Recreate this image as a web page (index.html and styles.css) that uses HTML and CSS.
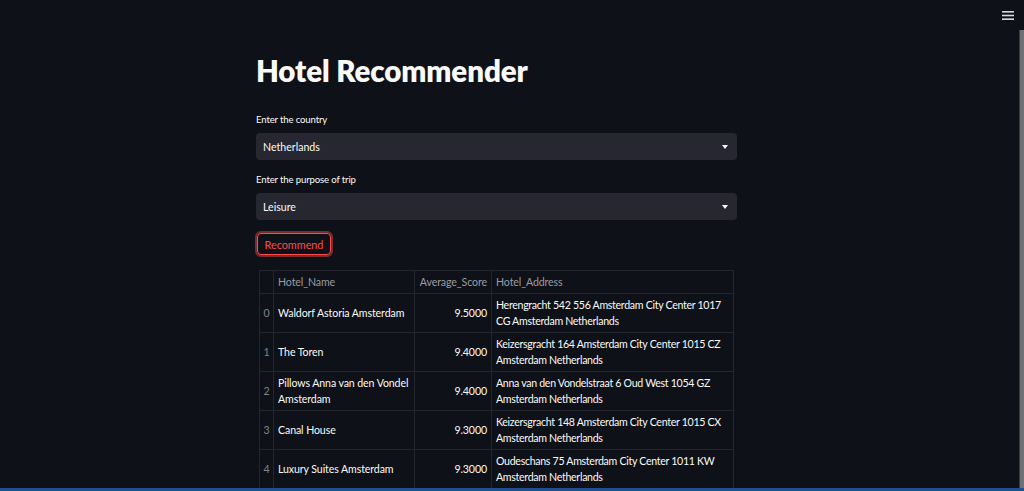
FILE: index.html
```html
<!DOCTYPE html>
<html>
<head>
<meta charset="utf-8">
<link rel="stylesheet" href="styles.css">
</head>
<body>
<div class="app">
  <div class="menu" aria-label="menu">
    <svg width="12" height="9" viewBox="0 0 12 9"><rect x="0" y="0" width="12" height="1.6" fill="#d8d8d8"/><rect x="0" y="3.7" width="12" height="1.6" fill="#d8d8d8"/><rect x="0" y="7.4" width="12" height="1.6" fill="#d8d8d8"/></svg>
  </div>
  <div class="scrollbar"></div>
  <main class="main">
    <h1 class="title">Hotel Recommender</h1>
    <div class="field first">
      <label class="label">Enter the country</label>
      <div class="select"><span>Netherlands</span><span class="caret"></span></div>
    </div>
    <div class="field second">
      <label class="label">Enter the purpose of trip</label>
      <div class="select"><span>Leisure</span><span class="caret"></span></div>
    </div>
    <div class="btn-wrap"><button class="btn">Recommend</button></div>
    <div class="df">
      <table class="table">
        <colgroup><col class="c0"><col class="c1"><col class="c2"><col class="c3"></colgroup>
        <thead>
          <tr><th class="idx"></th><th>Hotel_Name</th><th class="num">Average_Score</th><th>Hotel_Address</th></tr>
        </thead>
        <tbody>
          <tr><td class="idx">0</td><td>Waldorf Astoria Amsterdam</td><td class="num">9.5000</td><td class="addr">Herengracht 542 556 Amsterdam City Center 1017<br>CG Amsterdam Netherlands</td></tr>
          <tr><td class="idx">1</td><td>The Toren</td><td class="num">9.4000</td><td class="addr">Keizersgracht 164 Amsterdam City Center 1015 CZ<br>Amsterdam Netherlands</td></tr>
          <tr><td class="idx">2</td><td>Pillows Anna van den Vondel<br>Amsterdam</td><td class="num">9.4000</td><td class="addr">Anna van den Vondelstraat 6 Oud West 1054 GZ<br>Amsterdam Netherlands</td></tr>
          <tr><td class="idx">3</td><td>Canal House</td><td class="num">9.3000</td><td class="addr">Keizersgracht 148 Amsterdam City Center 1015 CX<br>Amsterdam Netherlands</td></tr>
          <tr><td class="idx">4</td><td>Luxury Suites Amsterdam</td><td class="num">9.3000</td><td class="addr">Oudeschans 75 Amsterdam City Center 1011 KW<br>Amsterdam Netherlands</td></tr>
        </tbody>
      </table>
    </div>
  </main>
  <div class="bottombar"></div>
</div>
</body>
</html>
```
FILE: styles.css
```css
html, body {
  margin: 0;
  padding: 0;
  background: #0e1117;
  height: 100%;
  overflow: hidden;
}
body {
  font-family: "Lato", "Liberation Sans", sans-serif;
  color: #fafafa;
}
.app {
  position: relative;
  width: 1024px;
  height: 491px;
  overflow: hidden;
}
.menu {
  position: absolute;
  left: 1002px;
  top: 11px;
  line-height: 0;
}
.scrollbar {
  position: absolute;
  left: 1019px;
  top: 30px;
  width: 5px;
  height: 461px;
  background: #6f7074;
  border-left: 1px solid #3b3c40;
  box-sizing: border-box;
}
.bottombar {
  position: absolute;
  left: 0;
  bottom: 0;
  width: 1024px;
  height: 3px;
  background: #1f4f8e;
}
.main {
  width: 481px;
  margin-left: 256px;
  padding-top: 52px;
  display: flex;
  flex-direction: column;
}
.title {
  margin: 0;
  font-size: 29.5px;
  font-weight: 800;
  line-height: 38px;
  letter-spacing: -0.1px;
  color: #fafafa;
}
.field {
  display: flex;
  flex-direction: column;
}
.field.first {
  margin-top: 23px;
}
.field.second {
  margin-top: 13px;
}
.label {
  font-size: 9.6px;
  line-height: 14px;
  letter-spacing: -0.15px;
  color: #fafafa;
  margin-bottom: 6px;
}
.select {
  height: 27px;
  background: #262730;
  border-radius: 4px;
  display: flex;
  align-items: center;
  justify-content: space-between;
  padding: 0 9px 0 7px;
  font-size: 10.6px;
  color: #fafafa;
}
.caret {
  width: 0;
  height: 0;
  border-left: 3px solid transparent;
  border-right: 3px solid transparent;
  border-top: 4px solid #fafafa;
  margin-top: 1px;
}
.btn-wrap {
  display: flex;
  margin-top: 13px;
  padding-left: 1px;
}
.btn {
  font-family: inherit;
  font-size: 10.8px;
  color: #ff4b4b;
  background: transparent;
  border: 1px solid #ff4b4b;
  box-shadow: 0 0 0 2px rgba(255, 75, 75, 0.45);
  border-radius: 4px;
  height: 22px;
  width: 74px;
  padding: 0;
}
.df {
  margin-top: 15px;
  padding-left: 3px;
}
.table {
  width: 474px;
  border-collapse: collapse;
  table-layout: fixed;
  font-size: 10.6px;
  letter-spacing: -0.1px;
  border: 1px solid #23262d;
}
.c0 { width: 14px; }
.c1 { width: 141px; }
.c2 { width: 77px; }
.c3 { width: 242px; }
.table th, .table td {
  border: 1px solid #23262d;
  padding: 0 4px;
  text-align: left;
  white-space: nowrap;
  overflow: hidden;
}
.table th {
  font-weight: 400;
  color: #9a9ca4;
  height: 22px;
}
.table td {
  height: 38px;
  line-height: 16.5px;
  color: #fafafa;
}
.table td.addr {
  letter-spacing: -0.3px;
}
.table .idx {
  color: #80838c;
  padding: 0;
  text-align: center;
}
.table .num {
  text-align: right;
}
```
